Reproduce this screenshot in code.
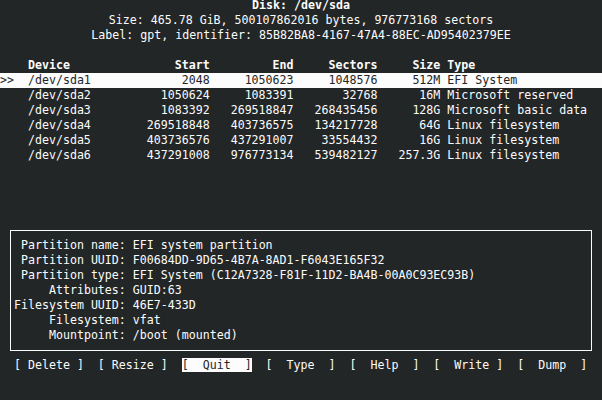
const parts = [
  ["/dev/sda1", "2048", "1050623", "1048576", "512M", "EFI System"],
  ["/dev/sda2", "1050624", "1083391", "32768", "16M", "Microsoft reserved"],
  ["/dev/sda3", "1083392", "269518847", "268435456", "128G", "Microsoft basic data"],
  ["/dev/sda4", "269518848", "403736575", "134217728", "64G", "Linux filesystem"],
  ["/dev/sda5", "403736576", "437291007", "33554432", "16G", "Linux filesystem"],
  ["/dev/sda6", "437291008", "976773134", "539482127", "257.3G", "Linux filesystem"],
];

const info = [
  " Partition name: EFI system partition",
  " Partition UUID: F00684DD-9D65-4B7A-8AD1-F6043E165F32",
  " Partition type: EFI System (C12A7328-F81F-11D2-BA4B-00A0C93EC93B)",
  "     Attributes: GUID:63",
  "Filesystem UUID: 46E7-433D",
  "     Filesystem: vfat",
  "     Mountpoint: /boot (mounted)",
];

// one table line, cfdisk style
function fmt(dev, start, end, sectors, size, type) {
  return dev.padEnd(14) + start.padStart(12) + end.padStart(12) + sectors.padStart(12) + size.padStart(9) + " " + type;
}

function Line({ children, className = "" }) {
  return <div className={"h-[15px] leading-[15px] whitespace-pre " + className}>{children}</div>;
}

export default function App() {
  const selected = 0;
  return (
    <div
      className="w-[602px] h-[400px] overflow-hidden bg-[#232627] text-[#fcfcfc] text-[11.627px]"
      style={{ fontFamily: '"DejaVu Sans Mono", "Liberation Mono", monospace' }}
    >
      <div className="-mt-[2px]">
        <Line className="text-center font-bold">Disk: /dev/sda</Line>
        <Line className="text-center">Size: 465.78 GiB, 500107862016 bytes, 976773168 sectors</Line>
        <Line className="text-center">Label: gpt, identifier: 85B82BA8-4167-47A4-88EC-AD95402379EE</Line>
        <Line />
        <Line className="font-bold">{"    " + fmt("Device", "Start", "End", "Sectors", "Size", "Type")}</Line>
        {parts.map((p, i) => (
          <Line key={p[0]} className={i === selected ? "bg-[#fcfcfc] text-[#232627]" : ""}>
            {(i === selected ? ">>" : "  ") + "  " + fmt(...p)}
          </Line>
        ))}
        <Line />
        <Line />
        <Line />
        <Line />
        <div className="pt-[7px] pb-[7px]">
          <div className="ml-[10px] w-[582px] border border-[#fcfcfc] pl-[3px] py-[7px]">
            {info.map((t) => (
              <Line key={t}>{t}</Line>
            ))}
          </div>
        </div>
        <Line>
          {"  [ Delete ]  [ Resize ]  "}
          <span className="bg-[#fcfcfc] text-[#232627]">{"[  Quit  ]"}</span>
          {"  [  Type  ]  [  Help  ]  [  Write ]  [  Dump  ]"}
        </Line>
      </div>
    </div>
  );
}
